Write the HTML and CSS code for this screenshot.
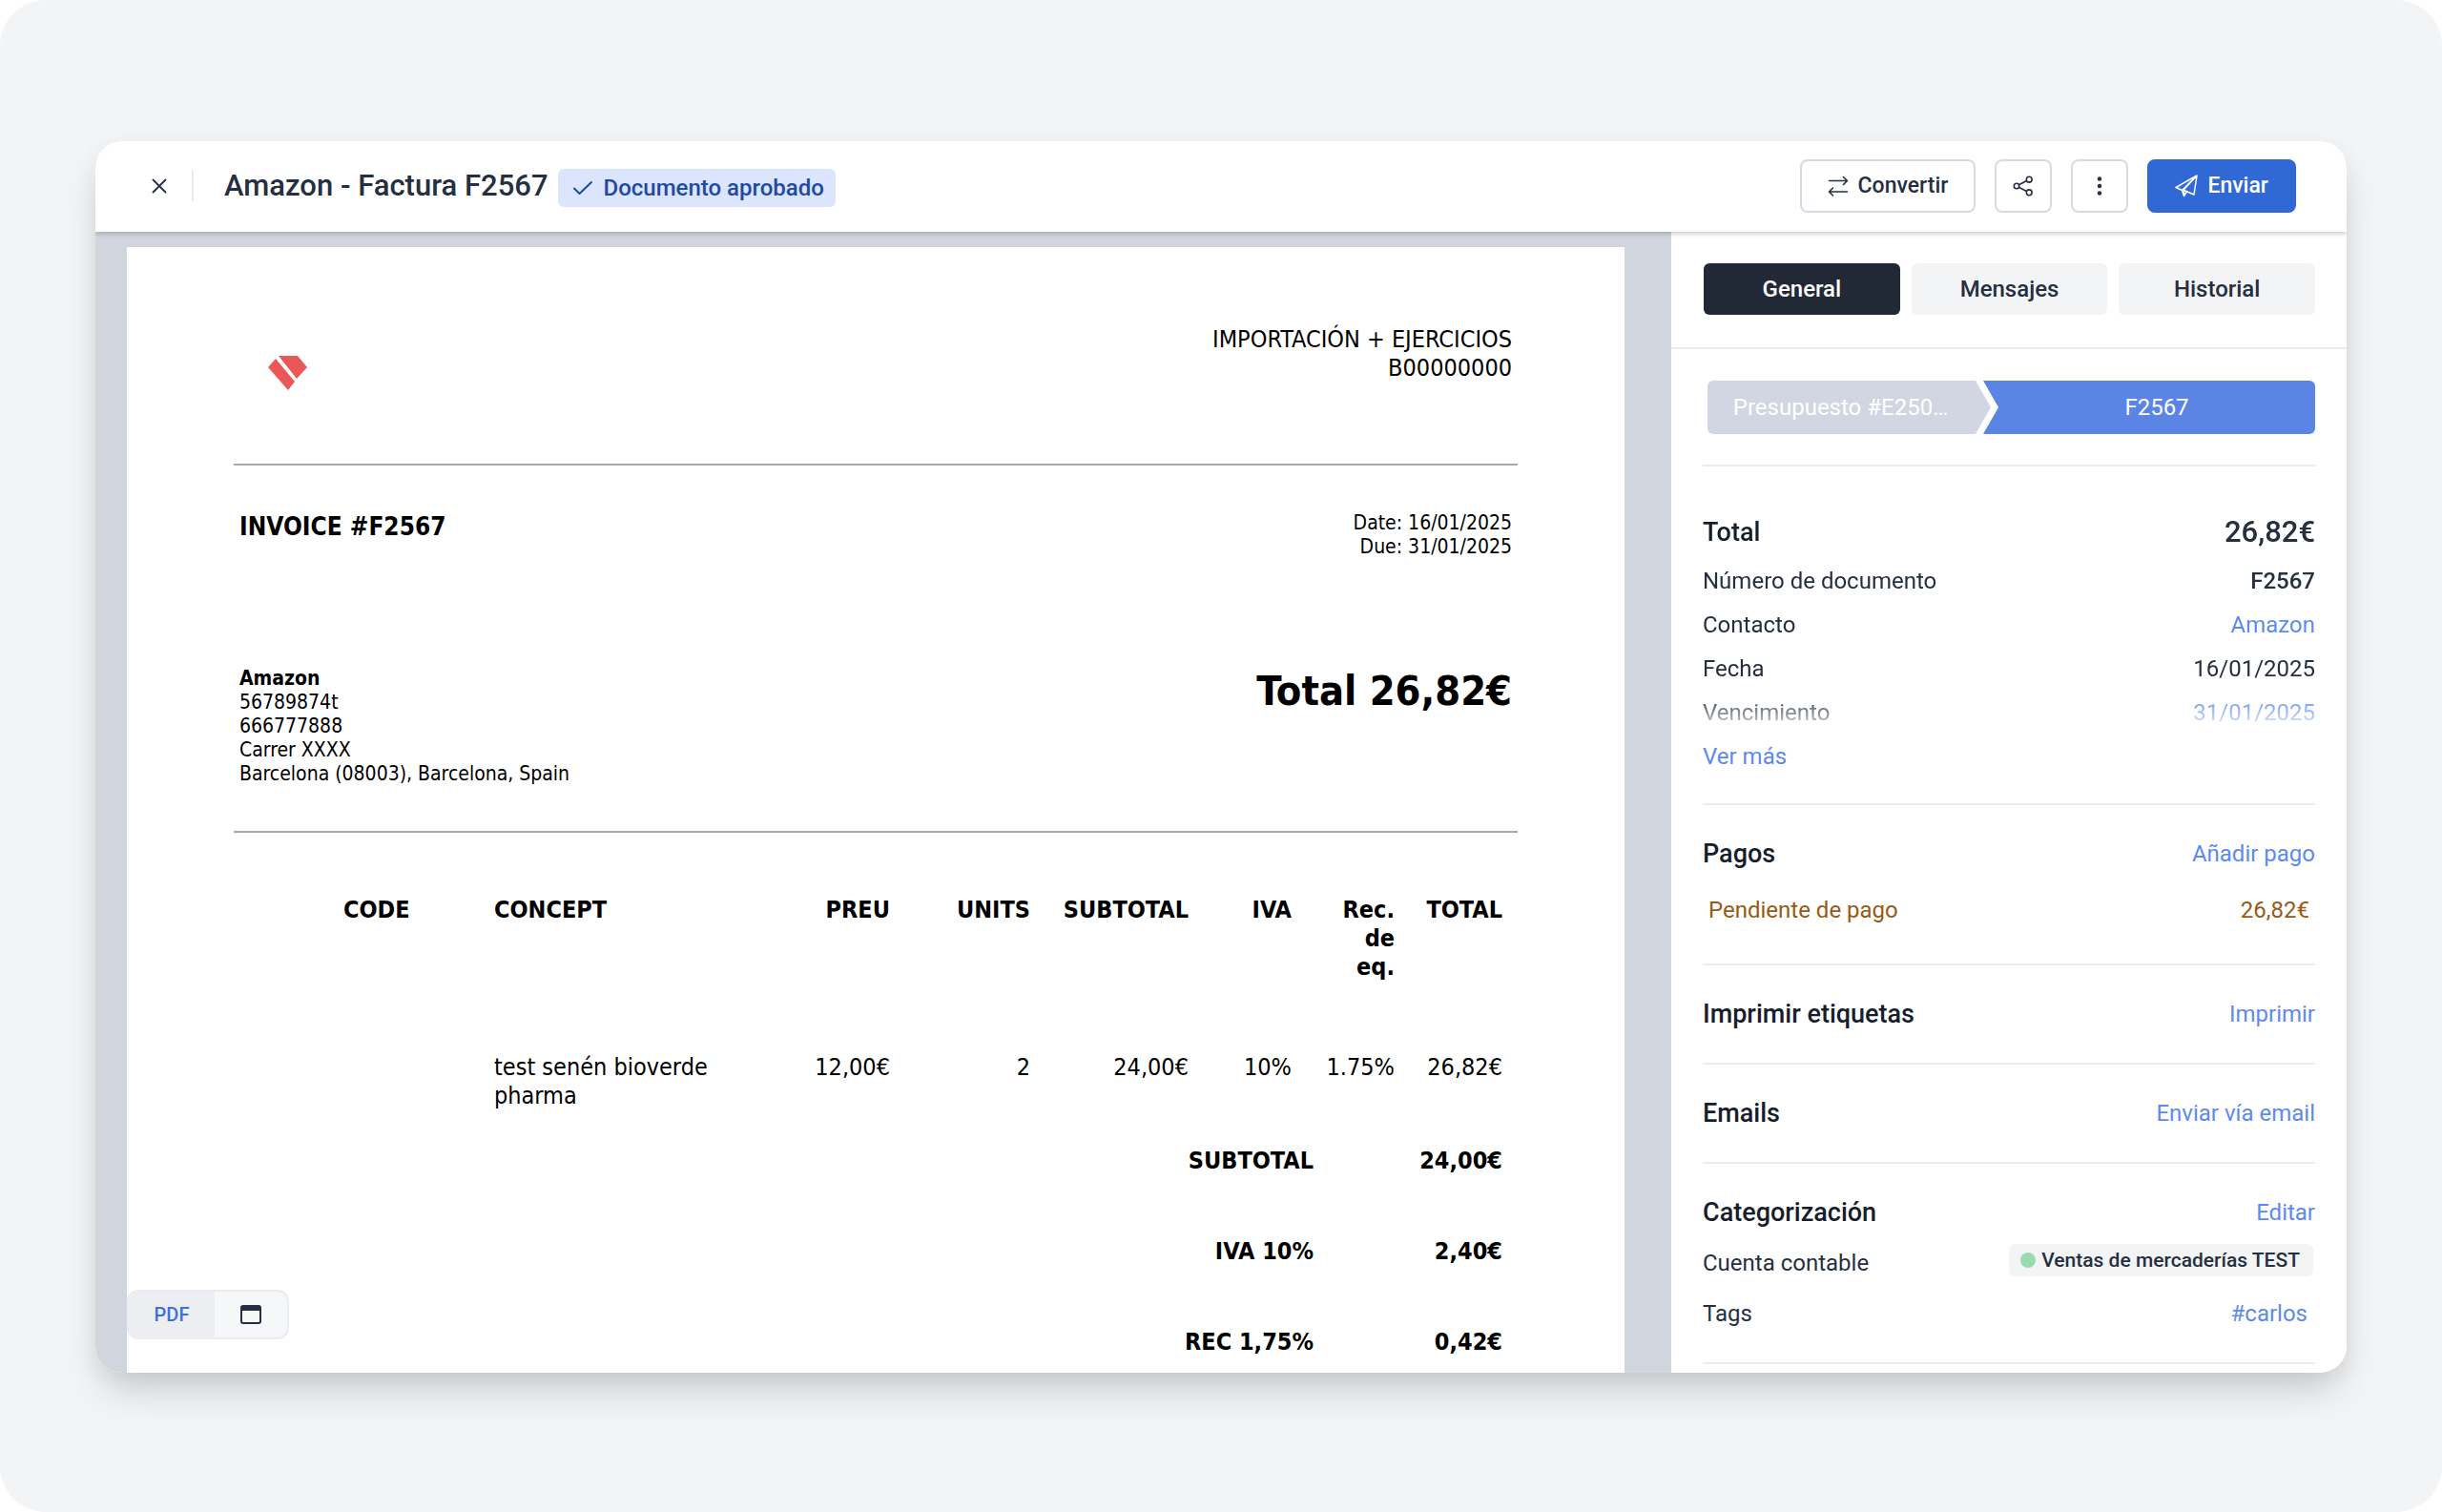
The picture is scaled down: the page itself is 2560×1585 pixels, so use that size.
FILE: index.html
```html
<!DOCTYPE html>
<html lang="es">
<head>
<meta charset="utf-8">
<meta name="viewport" content="width=device-width, initial-scale=1">
<title>Amazon - Factura F2567</title>
<link rel="stylesheet" href="styles.css">
</head>
<body>
<div class="stage">
  <main class="window">
    <header class="topbar">
      <button class="close" type="button" aria-label="Cerrar">
        <svg width="16" height="16" viewBox="0 0 16 16" fill="none" stroke="currentColor" stroke-width="1.8" stroke-linecap="round"><path d="M1.500 1.500l13 13M14.500 1.500l-13 13"/></svg>
      </button>
      <h1 class="title">Amazon - Factura F2567</h1>
      <span class="status">
        <svg width="20" height="16" viewBox="0 0 20 16" fill="none" stroke="currentColor" stroke-width="2" stroke-linecap="round" stroke-linejoin="round"><path d="M1 8.500l5.500 5.500L19 2"/></svg>
        Documento aprobado
      </span>
      <div class="actions">
        <button class="btn btn-convert" type="button">
          <svg width="22" height="22" viewBox="0 0 22 22" fill="none" stroke="currentColor" stroke-width="1.600" stroke-linecap="round" stroke-linejoin="round"><path d="M1.500 5.500h19M16.500 1.500l4 4-4 4M20.500 17h-19M5.500 13l-4 4 4 4"/></svg>
          Convertir
        </button>
        <button class="btn btn-icon" type="button" aria-label="Compartir">
          <svg width="22" height="22" viewBox="0 0 22 22" fill="none" stroke="currentColor" stroke-width="1.600"><circle cx="4" cy="11" r="2.700"/><circle cx="17.200" cy="4.200" r="2.900"/><circle cx="17.200" cy="17.800" r="2.900"/><path d="M6.400 9.700l8.200-4.200M6.400 12.300l8.200 4.200"/></svg>
        </button>
        <button class="btn btn-icon" type="button" aria-label="Más opciones">
          <svg width="22" height="22" viewBox="0 0 22 22" fill="currentColor"><circle cx="11" cy="3.500" r="2.200"/><circle cx="11" cy="11" r="2.200"/><circle cx="11" cy="18.500" r="2.200"/></svg>
        </button>
        <button class="btn btn-primary" type="button">
          <svg width="24" height="24" viewBox="0 0 24 24" fill="none" stroke="currentColor" stroke-width="1.500" stroke-linejoin="round"><path d="M23 1L1 13.500l6.500 3L23 1l-3 20-7.500-3.200L9.500 22.500l-2-6M12.500 17.800c-1.500-.7-2.500-1.200-3.500-1.600L23 1M9.500 22.500v-6"/></svg>
          Enviar
        </button>
      </div>
    </header>

    <div class="body">
      <section class="viewer">
        <article class="page">
          <header class="issuer">
            <svg class="logo" width="41" height="36" viewBox="0 0 41 36" fill="#eb5757"><path d="M11 0h20l10 12-11 12z"/><path d="M8 3l20 24-7 9L0 12z"/></svg>
            <p>IMPORTACIÓN + EJERCICIOS<br>B00000000</p>
          </header>
          <div class="meta">
            <h2>INVOICE #F2567</h2>
            <p>Date: 16/01/2025<br>Due: 31/01/2025</p>
          </div>
          <div class="client">
            <address><strong>Amazon</strong><br>56789874t<br>666777888<br>Carrer XXXX<br>Barcelona (08003), Barcelona, Spain</address>
            <p class="grand">Total 26,82€</p>
          </div>
          <table class="items">
            <colgroup><col class="c-pad"><col class="c-code"><col class="c-concept"><col class="c-price"><col class="c-units"><col class="c-sub"><col class="c-tax"><col class="c-tax"><col class="c-total"></colgroup>
            <thead>
              <tr><td></td><th class="left">CODE</th><th class="left">CONCEPT</th><th>PREU</th><th>UNITS</th><th>SUBTOTAL</th><th>IVA</th><th>Rec.<br>de<br>eq.</th><th>TOTAL</th></tr>
            </thead>
            <tbody>
              <tr><td></td><td></td><td class="left">test senén bioverde pharma</td><td>12,00€</td><td>2</td><td>24,00€</td><td>10%</td><td>1.75%</td><td>26,82€</td></tr>
            </tbody>
          </table>
          <table class="totals">
            <tbody>
              <tr><th>SUBTOTAL</th><td>24,00€</td></tr>
              <tr><th>IVA 10%</th><td>2,40€</td></tr>
              <tr><th>REC 1,75%</th><td>0,42€</td></tr>
            </tbody>
          </table>
        </article>
        <div class="switch">
          <button class="switch-item active" type="button">PDF</button>
          <button class="switch-item" type="button" aria-label="Vista web">
            <svg width="22" height="20" viewBox="0 0 22 20" fill="none" stroke="currentColor" stroke-width="2"><rect x="1" y="1" width="20" height="18" rx="2"/><path d="M1 3.500h20" stroke-width="5"/></svg>
          </button>
        </div>
      </section>

      <aside class="panel">
        <nav class="tabs">
          <button class="tab active" type="button">General</button>
          <button class="tab" type="button">Mensajes</button>
          <button class="tab" type="button">Historial</button>
        </nav>
        <div class="sections">
          <div class="flow">
            <a class="step step-prev" href="#presupuesto">Presupuesto #E250…</a>
            <a class="step step-current" href="#factura">F2567</a>
          </div>
          <section class="block details">
            <div class="fade">
              <div class="row row-total"><h2>Total</h2><strong>26,82€</strong></div>
              <div class="row"><span>Número de documento</span><b>F2567</b></div>
              <div class="row"><span>Contacto</span><a href="#contacto">Amazon</a></div>
              <div class="row"><span>Fecha</span><span>16/01/2025</span></div>
              <div class="row"><span>Vencimiento</span><a href="#vencimiento">31/01/2025</a></div>
            </div>
            <div class="row"><a href="#mas">Ver más</a></div>
          </section>
          <section class="block">
            <div class="head"><h2>Pagos</h2><a href="#pago">Añadir pago</a></div>
            <div class="pending"><span>Pendiente de pago</span><span>26,82€</span></div>
          </section>
          <section class="block">
            <div class="head"><h2>Imprimir etiquetas</h2><a href="#imprimir">Imprimir</a></div>
          </section>
          <section class="block">
            <div class="head"><h2>Emails</h2><a href="#email">Enviar vía email</a></div>
          </section>
          <section class="block categories">
            <div class="head"><h2>Categorización</h2><a href="#editar">Editar</a></div>
            <div class="category"><span>Cuenta contable</span><span class="chip">Ventas de mercaderías TEST</span></div>
            <div class="category"><span>Tags</span><a class="tag" href="#carlos">#carlos</a></div>
          </section>
        </div>
      </aside>
    </div>
  </main>
</div>
</body>
</html>
```
FILE: styles.css
```css
* { box-sizing: border-box; }

body {
  margin: 0;
  background: #fff;
  color: #252f3f;
  font-family: Roboto, "Liberation Sans", sans-serif;
  font-size: 24px;
  line-height: 38px;
}

h1, h2, p { margin: 0; font-weight: 500; }
a { color: #5c8af0; text-decoration: none; }
button { font: inherit; color: inherit; cursor: pointer; }
svg { display: block; flex: none; }

.stage {
  display: flex;
  height: 100vh;
  padding: 148px 100px 146px;
  border-radius: 48px;
  background: #f3f4f6;
}

.window {
  display: flex;
  flex: 1;
  flex-direction: column;
  min-width: 0;
  overflow: hidden;
  border-radius: 28px;
  background: #fff;
  box-shadow: 0 24px 40px -8px rgba(0, 0, 0, .17), 0 6px 24px rgba(0, 0, 0, .05);
}

/* Top bar */
.topbar {
  display: flex;
  align-items: center;
  position: relative;
  z-index: 1;
  flex: none;
  height: 95px;
  padding: 0 53px 2px 48px;
  background: #fff;
  box-shadow: 0 2px 5px rgba(0, 0, 0, .22);
}

.close {
  display: grid;
  place-items: center;
  width: 55px;
  height: 33px;
  padding: 0 16px 0 0;
  border: 0;
  border-right: 2px solid #ebecf0;
  background: none;
}

.title { margin-left: 32px; font-size: 31px; }

.status {
  display: flex;
  align-items: center;
  gap: 12px;
  height: 40px;
  margin: 4px 0 0 10px;
  padding: 0 12px 0 16px;
  border-radius: 6px;
  background: #dbe6fe;
  color: #2249a0;
  font-weight: 500;
}

.actions { display: flex; gap: 20px; margin-left: auto; }

.btn {
  display: flex;
  align-items: center;
  justify-content: center;
  gap: 10px;
  height: 56px;
  padding: 0 27px;
  border: 2px solid #d8dae3;
  border-radius: 8px;
  background: #fff;
  font-size: 23px;
  font-weight: 500;
}

.btn-icon { width: 60px; padding: 0; }
.btn-primary { border-color: #3068d6; background: #3068d6; color: #fff; }

/* Document viewer */
.body { display: flex; flex: 1; min-height: 0; }

.viewer {
  position: relative;
  flex: 1;
  min-width: 0;
  overflow: hidden;
  padding: 16px 49px 0 33px;
  background: #d1d5de;
}

.page {
  min-height: 100%;
  padding: 80px 112px;
  background: #fff;
  color: #000;
  font-family: "DejaVu Sans Condensed", "DejaVu Sans", sans-serif;
  font-size: 25px;
  line-height: 30px;
}

.issuer, .meta, .client { display: flex; justify-content: space-between; padding: 0 6px; }
.issuer { height: 149px; padding: 2px 6px 0 36px; border-bottom: 2px solid #a9a9a9; }
.issuer p { font-weight: 400; text-align: right; }
.logo { margin-top: 32px; }
.meta { padding-top: 48px; font-size: 21px; line-height: 25px; }
.meta h2 { font-size: 26px; font-weight: 700; line-height: 32px; }
.meta p { font-weight: 400; text-align: right; }
.client { margin-top: 113px; padding-bottom: 47px; border-bottom: 2px solid #a9a9a9; font-size: 21px; line-height: 25px; }
.client address { font-style: normal; }
.grand { font-size: 43px; font-weight: 700; line-height: 50px; }

table { width: 100%; border-collapse: collapse; }
.items { margin-top: 50px; table-layout: fixed; }
.items th, .items td { padding: 16px 16px 5px 8px; text-align: right; vertical-align: top; }
.items tbody td { padding-top: 70px; }
.items .left { padding-left: 16px; text-align: left; }
.c-pad { width: 99px; }
.c-code { width: 158px; }
.c-price { width: 170px; }
.c-units { width: 147px; }
.c-sub { width: 166px; }
.c-tax { width: 108px; }
.c-total { width: 113px; }

.totals th, .totals td { height: 95px; padding: 0 16px; text-align: right; font-weight: 700; }
.totals td { width: 198px; }

.switch {
  position: absolute;
  bottom: 35px;
  left: 33px;
  display: flex;
  height: 52px;
  overflow: hidden;
  border: 2px solid #ebebf1;
  border-radius: 12px;
  background: #f6f7f9;
}

.switch-item {
  display: grid;
  place-items: center;
  width: 76px;
  padding: 0;
  border: 0;
  background: none;
  font-size: 20px;
  font-weight: 500;
}

.switch-item.active { width: 90px; background: #eceef2; color: #3f6fdb; }

/* Side panel */
.panel { display: flex; flex: 0 0 30%; flex-direction: column; min-width: 0; background: #fff; }

.tabs {
  display: flex;
  gap: 12px;
  padding: 33px 33px 34px 34px;
  border-bottom: 2px solid #ebecf0;
}

.tab {
  flex: 1;
  height: 54px;
  padding: 0;
  border: 0;
  border-radius: 6px;
  background: #f3f4f6;
  font-weight: 500;
}

.tab.active { background: #222936; color: #fff; }

.sections { padding: 33px 33px 0; }

.flow { display: flex; height: 56px; margin-bottom: 32px; padding-left: 5px; }
.step { display: grid; place-items: center; color: #fff; line-height: 56px; }

.step-prev {
  flex: 0 0 297px;
  padding-right: 18px;
  border-radius: 6px 0 0 6px;
  background: #d2d6e2;
  clip-path: polygon(0 0, calc(100% - 16px) 0, 100% 50%, calc(100% - 16px) 100%, 0 100%);
}

.step-current {
  flex: 1;
  margin-left: -8px;
  padding-left: 16px;
  border-radius: 0 6px 6px 0;
  background: #5a85e4;
  clip-path: polygon(0 0, 100% 0, 100% 100%, 0 100%, 16px 50%);
}

.block { padding: 32px 0; border-top: 2px solid #ebecf0; }
.block h2 { color: #161e2e; font-size: 27px; line-height: 38px; }
.head, .row, .category, .pending { display: flex; align-items: center; justify-content: space-between; }

.details { padding: 41px 0 26px; }
.row { height: 46px; }
.row b { font-weight: 500; }
.row-total { height: 56px; }
.row-total strong { font-size: 31px; font-weight: 500; }
.fade {
  -webkit-mask-image: linear-gradient(#000 calc(100% - 42px), transparent 100%);
  mask-image: linear-gradient(#000 calc(100% - 42px), transparent 100%);
}

.pending { height: 48px; margin-top: 16px; padding: 0 6px; color: #975a16; }

.categories { border-bottom: 2px solid #ebecf0; }
.category { height: 38px; margin-top: 15px; }
.chip {
  display: flex;
  align-items: center;
  gap: 6px;
  height: 34px;
  margin: 0 2px 6px 0;
  padding: 0 14px 0 12px;
  border-radius: 6px;
  background: #f3f4f6;
  font-size: 21px;
  font-weight: 500;
}
.chip::before { content: ""; width: 16px; height: 16px; border-radius: 50%; background: #9adbae; }
.tag { padding-right: 8px; }
```
